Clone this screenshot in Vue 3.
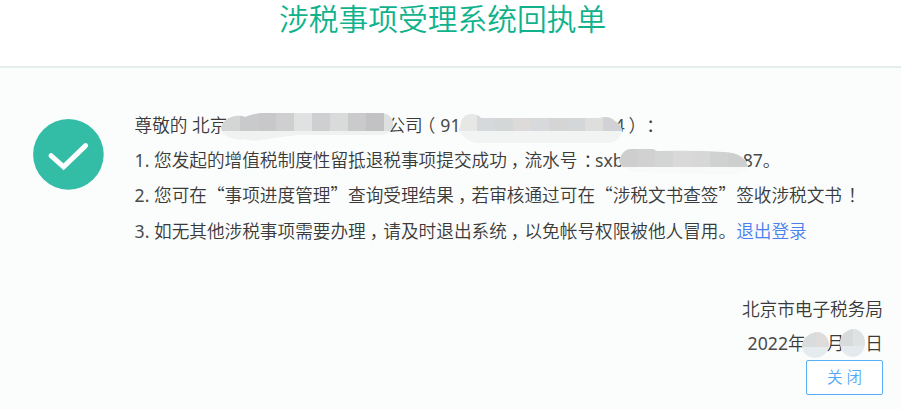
<script setup>
const masks = {
  company: {
    w: 172, h: 28, top: 18,
    shape: 'M14 3 Q20 2 24 4 Q32 1 40 0 H162 Q172 2 172 12 Q171 21 160 22 H76 Q58 24 40 27 Q30 29 24 26 Q18 28 10 25 Q0 22 0 14 Q3 5 14 3Z',
    topFills: [['#d4d6d5', 19], ['#c9cacc', 19], ['#c8c8ca', 17], ['#cfced0', 18], ['#e0e1e1', 18], ['#cfced0', 18], ['#d9dbda', 18], ['#cacacc', 18], ['#c2c1c4', 18], ['#dedfdf', 9]],
    low: '#f0f1f1',
  },
  code: {
    w: 163, h: 29, top: 17,
    shape: 'M2 8 Q5 0 12 0 Q19 0 22 4 H140 Q150 1 156 7 Q163 11 163 18 Q160 28 150 29 H18 Q6 27 0 17Z',
    topFills: [['#e7e7e6', 18], ['#d5d9db', 18], ['#d4d7d7', 18], ['#dcdbda', 18], ['#d8d9dc', 18], ['#d5d5d6', 18], ['#d3d7da', 18], ['#dedfdd', 18], ['#d1d2d5', 19]],
    low: '#f2f3f3',
  },
  serial: {
    w: 129, h: 26, top: 18,
    shape: 'M6 2 Q8 0 12 0 H34 L38 2 Q75 1 105 3 Q126 4 129 18 Q124 26 108 26 Q80 25 58 24 L16 23 Q2 20 0 12 Q2 5 6 2Z',
    topFills: [['#cdcecd', 18], ['#d0d1d0', 18], ['#d3d4d4', 18], ['#d8d9d8', 19], ['#d7d7d8', 18], ['#d0d1d1', 18], ['#cdcfce', 20]],
    low: '#f8f9f9',
  },
  month: {
    w: 27, h: 26, top: 15,
    shape: 'M14 0 Q25 0 27 12 Q26 25 13 26 Q1 25 0 14 Q1 3 14 0Z',
    topFills: [['#d9dcdd', 14], ['#dedddb', 13]],
    low: '#e5ebee',
  },
  day: {
    w: 25, h: 28, top: 17,
    shape: 'M13 0 Q24 1 25 14 Q24 27 13 28 Q1 27 0 14 Q1 2 13 0Z',
    topFills: [['#d7dbdc', 13], ['#dfe2e2', 12]],
    low: '#e3e9ed',
  },
}
for (const m of Object.values(masks)) {
  let x = 0
  m.cells = m.topFills.map(([fill, width]) => {
    const cell = { fill, width, x }
    x += width
    return cell
  })
}
</script>

<template>
  <main class="page">
    <svg class="defs" width="0" height="0">
      <defs>
        <symbol v-for="(m, id) in masks" :id="'mask-' + id" :key="id" :viewBox="`0 0 ${m.w} ${m.h}`">
          <clipPath :id="'clip-' + id"><path :d="m.shape" /></clipPath>
          <g :clip-path="`url(#clip-${id})`">
            <rect :width="m.w" :height="m.h" :fill="m.low" />
            <rect v-for="c in m.cells" :key="c.x" :x="c.x" :width="c.width" :height="m.top" :fill="c.fill" shape-rendering="crispEdges" />
          </g>
        </symbol>
      </defs>
    </svg>
    <header class="head"><h1>涉税事项受理系统回执单</h1></header>
    <section class="body">
      <svg class="check" viewBox="0 0 71 71">
        <circle cx="35.4" cy="35.4" r="35.3" fill="#33bda7" />
        <path d="M18 36.6 30.6 47.8 52.6 26.6" fill="none" stroke="#fff" stroke-width="5" stroke-linecap="round" />
      </svg>
      <div class="message">
        <p>尊敬的 北京<span class="gap company"><svg><use href="#mask-company" /></svg></span>公司<i class="open">（</i><b>91</b><span class="gap code"><svg><use href="#mask-code" /></svg></span><b>4</b><i class="close">）</i><i class="colon-end">：</i></p>
        <p><b>1.</b> 您发起的增值税制度性留抵退税事项提交成功<i class="comma">，</i>流水号<i class="colon">：</i><b>sxb</b><span class="gap serial"><svg><use href="#mask-serial" /></svg></span><b>87</b>。</p>
        <p><b>2.</b> 您可在<i>“</i>事项进度管理<i>”</i>查询受理结果<i class="comma">，</i>若审核通过可在<i>“</i>涉税文书查签<i>”</i>签收涉税文书<i class="bang">！</i></p>
        <p><b>3.</b> 如无其他涉税事项需要办理<i class="comma">，</i>请及时退出系统<i class="comma">，</i>以免帐号权限被他人冒用。<a>退出登录</a></p>
      </div>
    </section>
    <footer class="foot">
      <p>北京市电子税务局</p>
      <p><b>2022</b>年<span class="gap month"><svg><use href="#mask-month" /></svg></span>月<span class="gap day"><svg><use href="#mask-day" /></svg></span><b>1</b>日</p>
      <button>关 闭</button>
    </footer>
  </main>
</template>

<style>
body { margin: 0; background: #fafdfc; }
</style>
<style scoped>
.page { width: 901px; height: 409px; overflow: hidden; background: #fafdfc; color: #3a3a3a; font: 350 17.65px/35.2px "Noto Sans", "Noto Sans CJK SC", sans-serif; }
.defs { display: block; }
.head { display: flow-root; height: 66px; background: #fff; border-bottom: 2px solid #e6eeed; }
h1 { margin: -5px 0 0; padding-left: 279px; font: 350 29.75px/44px "Noto Sans CJK SC", sans-serif; color: #10b28b; white-space: nowrap; }
.body { display: flex; padding: 40px 0 0 33px; height: 180px; box-sizing: border-box; }
.check { width: 71px; height: 71px; margin: 11px 30.6px 0 0; flex: none; }
p { margin: 0; white-space: nowrap; height: 35.2px; }
b { font-weight: 400; color: #4a4a4a; }
i { display: inline-block; width: 17.65px; font-family: "Noto Sans CJK SC", sans-serif; font-style: normal; line-height: 1; }
.open { text-indent: -5px; }
.close { text-indent: 4px; }
.colon { text-indent: 6px; }
.colon-end { text-indent: 4px; }
.comma { text-indent: 4px; }
.bang { text-indent: 6px; }
a { color: #4a7ff0; }
.gap { display: inline-block; position: relative; height: 18px; vertical-align: middle; }
.gap svg { position: absolute; }
.company { width: 160px; }
.company svg { left: -6px; top: -5px; width: 172px; height: 28px; }
.code { width: 154px; }
.code svg { left: -2px; top: -4px; width: 163px; height: 29px; }
.serial { width: 119px; }
.serial svg { left: -5px; top: -5px; width: 129px; height: 26px; }
.month { width: 21px; }
.month svg { left: -4px; top: -4px; width: 27px; height: 26px; }
.day { width: 11px; }
.day svg { left: -4px; top: -7px; width: 25px; height: 28px; }
.foot { display: flex; flex-direction: column; align-items: flex-end; padding: 45px 18px 0 0; }
.foot p { height: 33.5px; line-height: 33.5px; }
button { width: 77px; height: 35px; padding: 0; border: 1px solid #58aef8; border-radius: 2px; background: #fff; color: #55a8f5; font: 350 15.5px/31px "Noto Sans", "Noto Sans CJK SC", sans-serif; }
</style>
